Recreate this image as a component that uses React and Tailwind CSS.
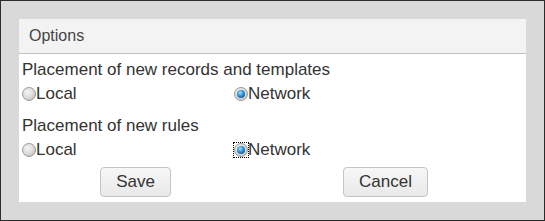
import React, { useState } from "react";

const Radio = ({ checked, focused, label, onClick }) => {
  return (
    <label className="flex items-center cursor-pointer" onClick={onClick}>
      <span
        className={`flex items-center justify-center w-[14px] h-[14px] ${focused ? "outline outline-1 outline-dotted outline-black outline-offset-0" : ""}`}
      >
        <span className="w-[14px] h-[14px] rounded-full border border-[#9a9a9a] bg-[radial-gradient(circle_at_40%_35%,#f4f4f4_0%,#dcdcdc_50%,#b4b4b4_100%)] flex items-center justify-center">
          {checked && (
            <span className="w-[8px] h-[8px] rounded-full bg-[radial-gradient(circle_at_40%_35%,#a8e4ff_0%,#2b8fd2_45%,#0a3b68_100%)]" />
          )}
        </span>
      </span>
      <span>{label}</span>
    </label>
  );
};

const App = () => {
  const [records, setRecords] = useState("network");
  const [rules, setRules] = useState("network");

  return (
    <div className="w-[545px] h-[221px] border border-[#2b2b2b] bg-[#d9d9d9] p-[18px] font-['Liberation_Sans',Arial,sans-serif] text-[17px] text-[#333]">
      <div className="w-full h-full bg-white flex flex-col">
        <div className="h-[35px] bg-[#f3f3f3] border-b border-[#c3c3c3] flex items-center pl-[10px] text-[16px] text-[#444]">
          Options
        </div>
        <div className="flex flex-col px-[3px] pt-[4px] leading-[24px]">
          <div>Placement of new records and templates</div>
          <div className="grid grid-cols-[212px_1fr]">
            <Radio label="Local" checked={records === "local"} onClick={() => setRecords("local")} />
            <Radio label="Network" checked={records === "network"} onClick={() => setRecords("network")} />
          </div>
          <div className="mt-[8px]">Placement of new rules</div>
          <div className="grid grid-cols-[212px_1fr]">
            <Radio label="Local" checked={rules === "local"} onClick={() => setRules("local")} />
            <Radio label="Network" focused checked={rules === "network"} onClick={() => setRules("network")} />
          </div>
          <div className="flex mt-[5px]">
            <button className="ml-[78px] w-[71px] h-[30px] rounded-[4px] border border-[#c4c4c4] bg-gradient-to-b from-[#f7f7f7] to-[#e9e9e9] text-[#333] text-[17px]">
              Save
            </button>
            <button className="ml-[172px] w-[85px] h-[30px] rounded-[4px] border border-[#c4c4c4] bg-gradient-to-b from-[#f7f7f7] to-[#e9e9e9] text-[#333] text-[17px]">
              Cancel
            </button>
          </div>
        </div>
      </div>
    </div>
  );
};

export default App;
